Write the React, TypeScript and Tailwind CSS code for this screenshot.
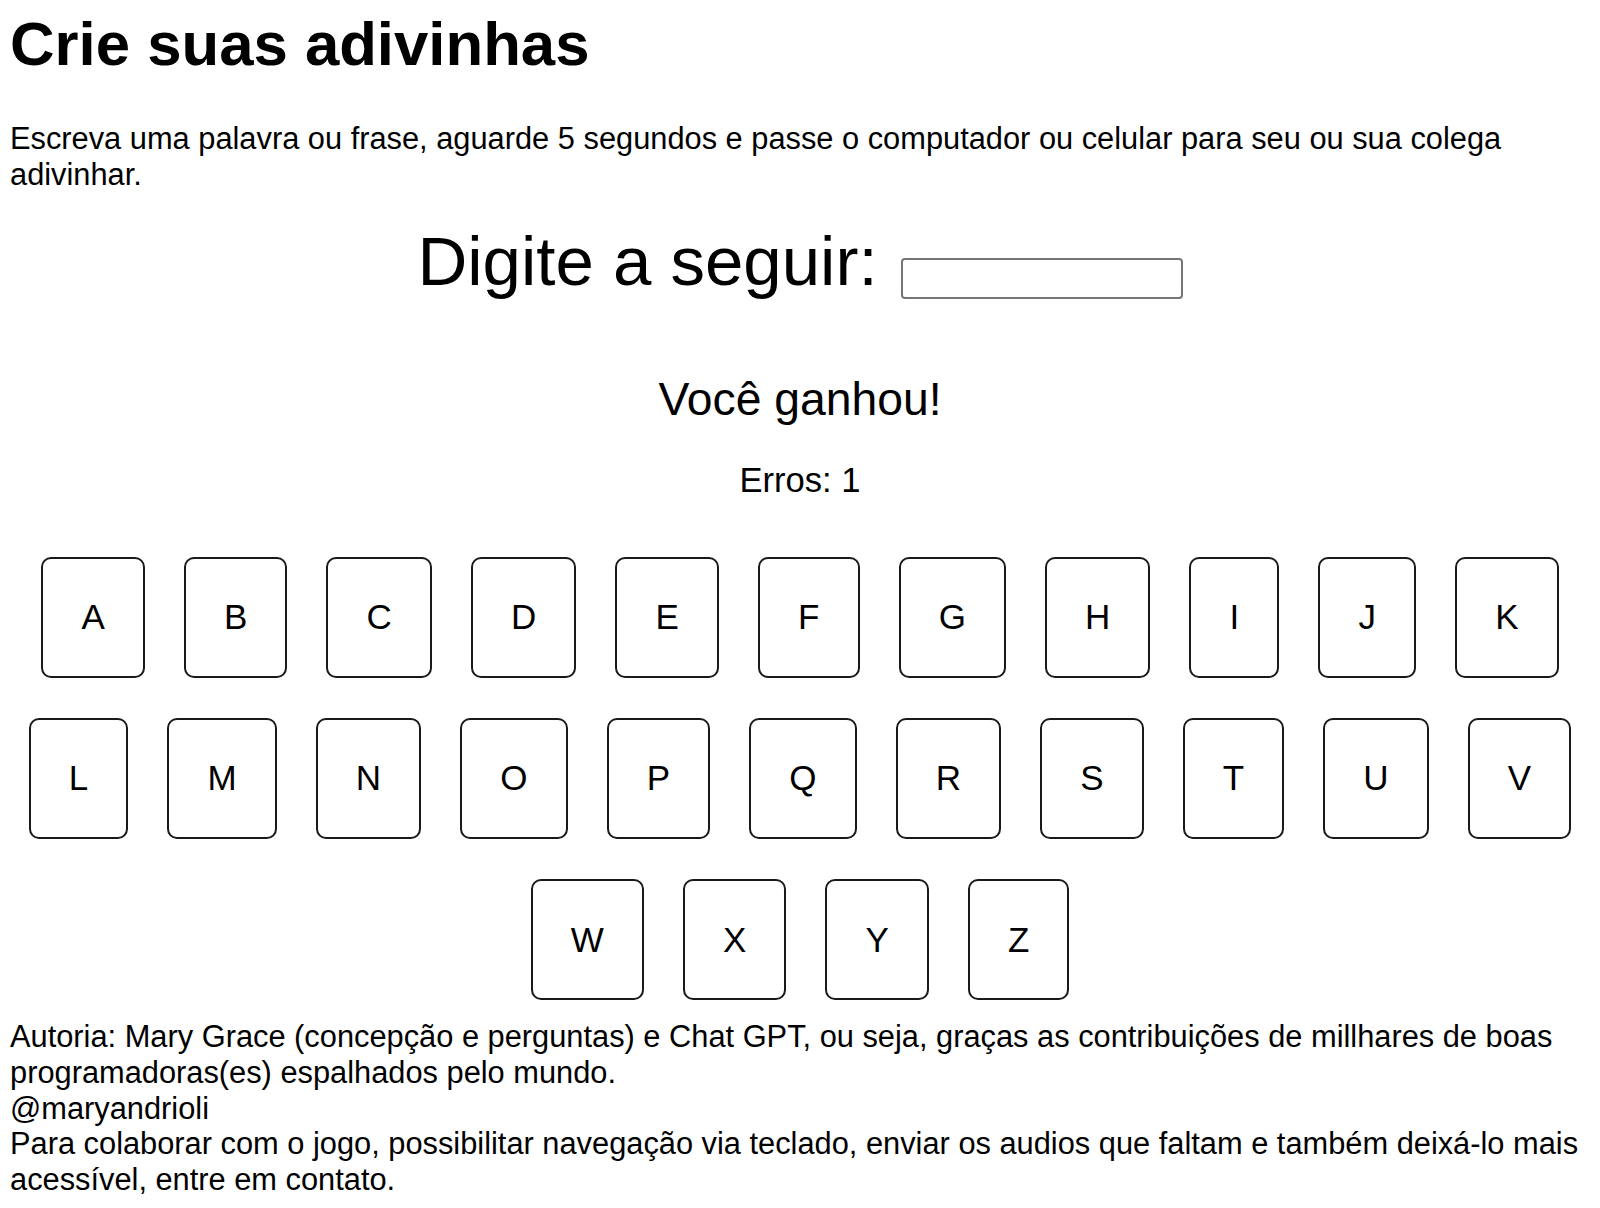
import { useState } from "react";

const LETTERS = "ABCDEFGHIJKLMNOPQRSTUVWXYZ".split("");

export default function App() {
  const [guess, setGuess] = useState("");
  const [errors] = useState(1);

  return (
    <div
      className="min-h-screen bg-white px-[10px] pt-[9px] text-black"
      style={{ fontFamily: '"Liberation Sans", Arial, Helvetica, sans-serif' }}
    >
      <h1 className="text-[61.7px] font-bold leading-[70px]">Crie suas adivinhas</h1>

      <p className="mt-[42px] text-[30.8px] leading-[35.8px]">
        Escreva uma palavra ou frase, aguarde 5 segundos e passe o computador ou celular para seu ou sua colega
        adivinhar.
      </p>

      {/* Entrada da palavra */}
      <div className="mt-[30px] flex items-start justify-center">
        <h2 className="text-[69px] leading-[78px]">Digite a seguir:</h2>
        <input
          type="text"
          value={guess}
          onChange={e => setGuess(e.target.value)}
          className="ml-[23px] mt-[35px] h-[41px] w-[282px] rounded-[4px] border-2 border-[#767676] bg-white px-1 text-[25px] outline-none"
        />
      </div>

      <h2 className="mt-[72px] text-center text-[46.3px] leading-[52px]">Você ganhou!</h2>
      <p className="mt-[36px] text-center text-[34.6px] leading-[39px]">Erros: {errors}</p>

      {/* Teclado */}
      <div className="mt-[57px] flex flex-wrap justify-center gap-x-[39px] gap-y-[40px]">
        {LETTERS.map(letter => (
          <button
            key={letter}
            className="rounded-[10px] border-2 border-[#1a1a1a] bg-white px-[38.1px] py-[38.6px] text-[35px] leading-[40px] text-black"
          >
            {letter}
          </button>
        ))}
      </div>

      <footer className="mt-[19px] pb-[20px] text-[30.8px] leading-[35.7px]">
        <p>
          Autoria: Mary Grace (concepção e perguntas) e Chat GPT, ou seja, graças as contribuições de millhares de boas
          programadoras(es) espalhados pelo mundo.
        </p>
        <p>@maryandrioli</p>
        <p>
          Para colaborar com o jogo, possibilitar navegação via teclado, enviar os audios que faltam e também deixá-lo
          mais acessível, entre em contato.
        </p>
      </footer>
    </div>
  );
}
